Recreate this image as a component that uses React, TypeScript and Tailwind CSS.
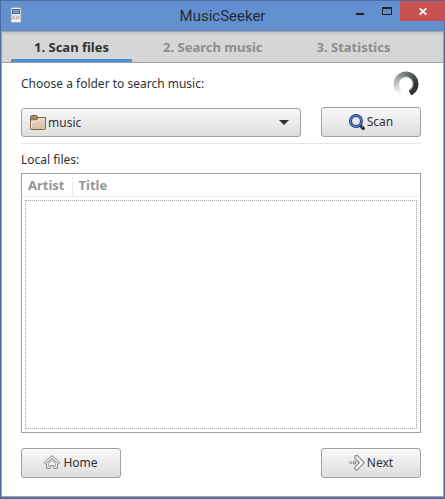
import { useState, type ReactNode } from "react";

const tabs = ["1. Scan files", "2. Search music", "3. Statistics"];
const folders = ["music"];

function DeviceIcon() {
  return (
    <svg width="12" height="16" viewBox="0 0 12 16" aria-hidden="true">
      <rect x="1" y="0.5" width="10" height="15" fill="#f4f4f2" stroke="#a3a5a3" />
      <rect x="2" y="2" width="8" height="5" fill="#3f6ca3" />
      <rect x="3" y="3" width="6" height="3" fill="#709fd0" />
      <rect x="2" y="8" width="8" height="5" fill="#dcdcda" />
      <path d="M2.5 8.5v4l2-2zM6 9h1v3H6zM8 9h1v3H8z" fill="#b5b7b5" />
    </svg>
  );
}

function FolderIcon() {
  return (
    <svg width="16" height="16" viewBox="0 0 16 16" aria-hidden="true">
      <defs>
        <linearGradient id="folder" x1="0" y1="0" x2="0" y2="1">
          <stop offset="0" stopColor="#e6d8c4" />
          <stop offset="1" stopColor="#d5bd9c" />
        </linearGradient>
      </defs>
      <path d="M0.5 14V1.5L1.5 0.5H6.5L7.5 1.5V5H3v9z" fill="#9c8b6c" stroke="#75664a" />
      <path d="M0.5 6V13.5Q0.5 14.5 1.5 14.5H14.5Q15.5 14.5 15.5 13.5V2.5H8.5L6.5 5H1.5Q0.5 5 0.5 6Z" fill="url(#folder)" stroke="#806744" />
      <path d="M1.5 13.5V6H7L9 3.5H14.5" fill="none" stroke="#f3ebdf" />
    </svg>
  );
}

function SearchIcon() {
  return (
    <svg width="16" height="16" viewBox="0 0 16 16" aria-hidden="true">
      <defs>
        <radialGradient id="lens">
          <stop offset="0" stopColor="#f6f6f6" />
          <stop offset="1" stopColor="#cdd0d8" />
        </radialGradient>
      </defs>
      <path d="M11 11.3L14.2 14.4" stroke="#302d2b" strokeWidth="3.4" strokeLinecap="round" />
      <path d="M12.5 13.5L14 12.5" stroke="#8a8378" />
      <circle cx="7" cy="7" r="5.5" fill="url(#lens)" stroke="#253a7d" strokeWidth="3" />
      <circle cx="7" cy="7" r="5.5" fill="none" stroke="#5478c8" strokeWidth="1.4" />
    </svg>
  );
}

function HomeIcon() {
  return (
    <svg width="16" height="16" viewBox="0 0 16 16" fill="none" stroke="#888a85" aria-hidden="true">
      <path d="M8 0.7L15.3 7V8.6L13.5 9.2V13.5H9.8V10.5H6.2V13.5H2.5V9.2L0.7 8.6V7Z" fill="#f8f8f8" strokeLinejoin="round" />
      <path d="M2.6 8.2L8 3.6L13.4 8.2" strokeWidth="1.1" />
      <path d="M4.3 12V8.8L8 5.8L11.7 8.8V12" strokeWidth="0.8" />
    </svg>
  );
}

function NextIcon() {
  return (
    <svg width="16" height="16" viewBox="0 0 16 16" fill="#fafafa" stroke="#888a85" aria-hidden="true">
      <path d="M6.5 0.7H8.3L15.3 7.7L8.3 14.8H6.5Q5.9 14.8 5.9 14V12.4L10.5 7.7L5.9 3.2V1.4Q5.9 0.7 6.5 0.7Z" strokeLinejoin="round" strokeWidth="1.2" />
      <circle cx="1.6" cy="7.7" r="1.1" />
      <circle cx="5.6" cy="7.7" r="1.3" strokeWidth="1.2" />
    </svg>
  );
}

function Spinner() {
  return (
    <div
      role="status"
      aria-label="Scanning"
      className="size-[26px] rounded-full bg-[conic-gradient(from_156deg,#ffffff_0deg,#ffffff_46deg,#d8dad9_95deg,#a3a7a5_150deg,#7b807e_195deg,#4b514f_250deg,#2e3436_300deg,#2e3436_360deg)] [mask:radial-gradient(circle,transparent_6px,#000_8px,#000_12px,transparent_13px)]"
    />
  );
}

function PushButton({ icon, children, tight }: { icon: ReactNode; children: ReactNode; tight?: boolean }) {
  return (
    <button
      type="button"
      className={`flex h-[30px] w-[100px] items-center justify-center rounded-[3px] border border-[#a1a1a1] bg-linear-to-b from-[#f8f8f8] to-[#dedede] ${tight ? "gap-0.5" : "gap-[3px]"}`}
    >
      {icon}
      <span>{children}</span>
    </button>
  );
}

export default function App() {
  const [active, setActive] = useState(0);
  const [folder, setFolder] = useState(folders[0]);

  return (
    <div className="flex min-h-screen flex-col border border-[#4b6c9f] bg-[#5079b8] font-['Noto_Sans',sans-serif] text-xs text-[#2e3436]">
      <header className="grid h-[30px] grid-cols-[1fr_auto_1fr] bg-[#618fd0]">
        <div className="pt-1.5 pl-[9px]">
          <DeviceIcon />
        </div>
        <h1 className="font-['Roboto',sans-serif] text-[15px] leading-[30px] text-[#262b33]">MusicSeeker</h1>
        <div className="-mr-px flex justify-end">
          <button type="button" aria-label="Minimize" className="grid h-5 w-[28px] place-items-center">
            <svg width="8" height="8"><path d="M0 6h8v2H0z" fill="#222" /></svg>
          </button>
          <button type="button" aria-label="Maximize" className="grid h-5 w-[26px] place-items-center">
            <svg width="10" height="8"><path fillRule="evenodd" d="M0 0h10v8H0zM1 2v5h8V2z" fill="#222" /></svg>
          </button>
          <button type="button" aria-label="Close" className="grid h-5 w-[45px] place-items-center bg-[#c75050]">
            <svg width="8" height="7" viewBox="0 0 8 7"><path d="M0.7 0.3L7.3 6.7M7.3 0.3L0.7 6.7" stroke="#fff" strokeWidth="1.7" /></svg>
          </button>
        </div>
      </header>

      <div className="mb-px flex flex-1 flex-col border border-[#a1a1a1] bg-white">
        <nav role="tablist" className="flex h-[31px] gap-2 border-b border-[#a1a1a1] bg-[#d6d6d6] pl-[9px] shadow-[inset_0_2px_2px_#c6c6c6]">
          {tabs.map((tab, i) => (
            <button
              key={tab}
              type="button"
              role="tab"
              aria-selected={i === active}
              onClick={() => setActive(i)}
              className={`border-b-3 px-[23px] pt-1 text-[13px] font-bold whitespace-nowrap ${i === active ? "border-[#4a90d9] text-[#2e3436]" : "border-transparent text-[#8b8e8f]"}`}
            >
              {tab}
            </button>
          ))}
        </nav>

        <main className="flex flex-1 flex-col pt-2 pr-[22px] pb-[18px] pl-[19px]">
          <div className="flex h-[26px] items-center justify-between pr-0.5">
            <label htmlFor="folder-select">Choose a folder to search music:</label>
            <Spinner />
          </div>

          <div className="mt-2.5 flex items-end gap-5 border-b border-[#e6e6e6] pb-1.5">
            <div className="grid flex-1 items-center">
              <select
                id="folder-select"
                value={folder}
                onChange={(e) => setFolder(e.target.value)}
                className="col-start-1 row-start-1 h-[29px] w-full appearance-none rounded-[3px] border border-[#a1a1a1] bg-linear-to-b from-[#f8f8f8] to-[#dedede] pl-[26px]"
              >
                {folders.map((name) => (
                  <option key={name}>{name}</option>
                ))}
              </select>
              <div className="pointer-events-none col-start-1 row-start-1 flex items-center justify-between pr-3 pl-[9px]">
                <FolderIcon />
                <svg width="10" height="5" aria-hidden="true"><path d="M0 0h10L5 5z" fill="#2e3436" /></svg>
              </div>
            </div>
            <PushButton icon={<SearchIcon />} tight>Scan</PushButton>
          </div>

          <h2 className="mt-2 leading-4">Local files:</h2>

          <div className="mt-[5px] flex flex-1 flex-col border border-[#a1a1a1]">
            <table className="w-full border-collapse text-left text-[13px] text-[#939697]">
              <thead>
                <tr className="h-[22px] border-b border-[#ececec]">
                  <th className="w-[50px] border-r border-[#ececec] pl-1.5 leading-5">Artist</th>
                  <th className="pl-1.5 leading-5">Title</th>
                </tr>
              </thead>
            </table>
            <div className="m-[3px] flex-1 border border-dotted border-[#a3a3a3]" />
          </div>

          <div className="mt-[15px] flex justify-between">
            <PushButton icon={<HomeIcon />}>Home</PushButton>
            <PushButton icon={<NextIcon />} tight>Next</PushButton>
          </div>
        </main>
      </div>
    </div>
  );
}
